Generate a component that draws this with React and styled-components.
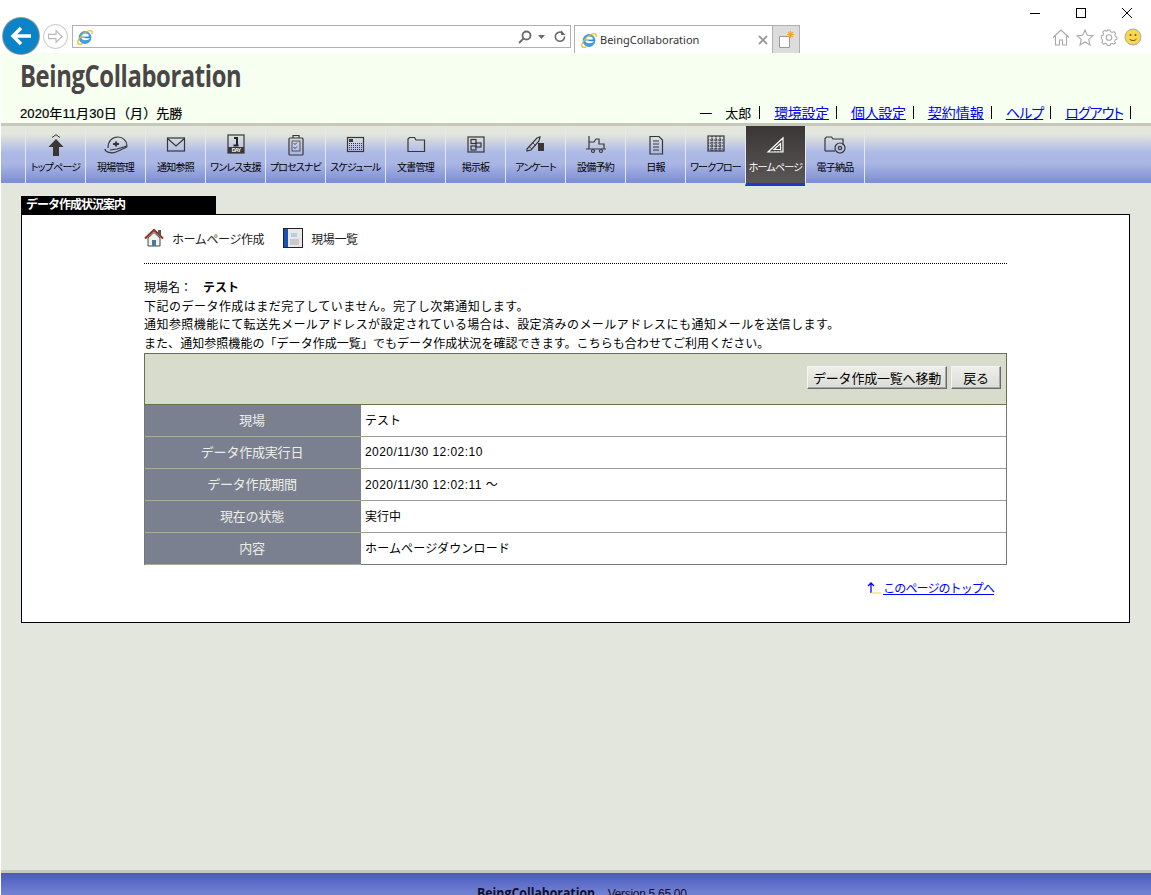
import React from "react";
import styled, { createGlobalStyle } from "styled-components";

const GlobalStyle = createGlobalStyle`
  html, body {
    margin: 0;
    padding: 0;
    height: 895px;
    overflow: hidden;
    background: #fff;
    font-family: "Liberation Sans", "Noto Sans CJK JP", sans-serif;
    font-size: 12px;
    color: #000;
  }
`;

const Page = styled.div`
  width: 1151px;
  height: 895px;
  overflow: hidden;
  display: flex;
  flex-direction: column;
  background: #fff;
`;

/* browser frame */
const Chrome = styled.div`
  height: 53px;
  flex: none;
  background: #fff;
  display: flex;
  flex-direction: column;
  overflow: visible;
`;
const WindowRow = styled.div`
  height: 18px;
  display: flex;
  justify-content: flex-end;
  align-items: flex-start;
  padding: 8px 19px 0 0;
  box-sizing: border-box;
  gap: 36px;
`;
const BrowserRow = styled.div`
  height: 35px;
  display: flex;
  align-items: flex-start;
  padding-left: 3px;
`;
const BackButton = styled.div`
  width: 36px;
  height: 36px;
  border-radius: 50%;
  background: #0a84c6;
  box-shadow: 0 0 0 1px #9a9a9a;
  display: flex;
  align-items: center;
  justify-content: center;
  flex: none;
  position: relative;
  z-index: 2;
`;
const ForwardButton = styled.div`
  width: 25px;
  height: 25px;
  margin: 6px 4px 0 4px;
  border: 1px solid #c4c4c4;
  border-radius: 50%;
  box-sizing: border-box;
  display: flex;
  align-items: center;
  justify-content: center;
  flex: none;
`;
const AddressBar = styled.div`
  width: 499px;
  height: 23px;
  margin-top: 7px;
  border: 1px solid #b0b0b0;
  box-sizing: border-box;
  display: flex;
  align-items: center;
  justify-content: space-between;
  padding: 0 4px 0 3px;
  flex: none;
`;
const AddressTools = styled.div`
  display: flex;
  align-items: center;
  gap: 6px;
`;
const Tab = styled.div`
  width: 199px;
  height: 28px;
  margin: 7px 0 0 3px;
  border: 1px solid #b0b0b0;
  border-bottom: none;
  box-sizing: border-box;
  display: flex;
  align-items: center;
  padding: 0 4px 0 5px;
  gap: 2px;
  flex: none;
  font-family: "Noto Sans", sans-serif;
  font-size: 11px;
  color: #333;
`;
const TabTitle = styled.span`
  flex: 1;
`;
const NewTab = styled.div`
  width: 27px;
  height: 28px;
  margin-top: 7px;
  background: #dcdcdc;
  border: 1px solid #b0b0b0;
  border-left: none;
  border-bottom: none;
  box-sizing: border-box;
  display: flex;
  align-items: center;
  justify-content: center;
  flex: none;
`;
const BrowserTools = styled.div`
  margin: 10px 9px 0 auto;
  display: flex;
  align-items: center;
  gap: 6px;
`;

/* site header */
const Header = styled.header`
  height: 70px;
  flex: none;
  margin-left: 1px;
  background: #f7fff0;
  padding: 0 20px 0 19px;
  display: flex;
  flex-direction: column;
  justify-content: space-between;
  box-sizing: border-box;
`;
const Logo = styled.div`
  font-family: "Open Sans", sans-serif;
  font-weight: 700;
  font-size: 31px;
  line-height: 44px;
  color: #4a4646;
  letter-spacing: -0.5px;
  transform: scaleX(0.768);
  transform-origin: left center;
  white-space: nowrap;
`;
const HeaderBottom = styled.div`
  display: flex;
  justify-content: space-between;
  align-items: center;
  height: 20px;
  margin-bottom: 1px;
  font-size: 13px;
`;
const DateText = styled.div`
  -webkit-text-stroke: 0.2px #000;
  letter-spacing: 0.1px;
`;
const UserMenu = styled.div`
  display: flex;
  align-items: center;
  font-size: 14px;
  font-feature-settings: "palt";
`;
const UserName = styled.span`
  white-space: pre;
  margin-right: 1px;
  font-size: 13px;
  font-feature-settings: normal;
`;
const MenuLink = styled.a`
  color: #0000ff;
  text-decoration: underline;
  margin-left: 14px;
  letter-spacing: ${(p) => p.$spacing || "0"};
`;
const MenuBar = styled.span`
  margin-left: 7px;
  width: 1px;
  height: 13px;
  background: #000;
`;

/* main nav */
const Nav = styled.nav`
  height: 63px;
  flex: none;
  margin-left: 1px;
  padding-left: 24px;
  border-top: 3px solid #c6c8bc;
  box-sizing: border-box;
  display: flex;
  background: linear-gradient(#e3e6dc 0, #e3e6dc 8px, #aebbe6 26px, #a9b5e2 38px, #8090d6 55px, #8090d6 57px, #e3e6dc 57px);
`;
const NavItem = styled.div`
  width: 60px;
  height: 60px;
  box-sizing: border-box;
  border-left: 1px solid #e4e8f2;
  display: flex;
  flex-direction: column;
  align-items: center;
  padding-top: 8px;
  font-size: 10px;
  white-space: nowrap;
  letter-spacing: -0.8px;
  font-feature-settings: "palt";
  color: ${(p) => (p.$active ? "#fff" : "#000")};
  background: ${(p) => (p.$active ? "linear-gradient(#3b3636, #5c5757)" : "transparent")};
  border-bottom: ${(p) => (p.$active ? "3px solid #1c3cc8" : "none")};
  &:last-child {
    border-right: 1px solid #e4e8f2;
  }
`;
const NavIcon = styled.div`
  height: 22px;
  display: flex;
  align-items: center;
  justify-content: center;
  color: ${(p) => (p.$active ? "#fff" : "#3a3636")};
`;
const NavLabel = styled.div`
  margin-top: 5px;
  line-height: 14px;
`;

/* content */
const Main = styled.main`
  flex: 1;
  min-height: 0;
  margin-left: 1px;
  background: #e3e6dc;
  padding: 10px 21px 0 20px;
`;
const PanelTitle = styled.div`
  width: 195px;
  height: 18px;
  background: #000;
  color: #fff;
  font-size: 12px;
  font-weight: 700;
  line-height: 18px;
  padding-left: 5px;
  box-sizing: border-box;
  letter-spacing: -1px;
`;
const Panel = styled.section`
  height: 409px;
  background: #fff;
  border: 1px solid #000;
  box-sizing: border-box;
  padding: 0 122px;
`;
const ActionRow = styled.div`
  height: 49px;
  display: flex;
  align-items: center;
  border-bottom: 1px dotted #000;
  box-sizing: border-box;
  padding-bottom: 2px;
  gap: 19px;
`;
const Action = styled.div`
  display: flex;
  align-items: center;
  gap: 8px;
  color: #222;
  font-size: 12px;
  letter-spacing: -0.4px;
`;
const Notes = styled.div`
  margin-top: 15px;
  font-size: 12px;
  line-height: 18.6px;
  color: #000;
  height: 74px;
  white-space: nowrap;
`;
const NoteLine = styled.div`
  letter-spacing: ${(p) => p.$spacing || "0"};
`;
const SiteName = styled.strong`
  margin-left: 11px;
`;
const Board = styled.div`
  border: 1px solid #777;
  border-top: none;
`;
const BoardBar = styled.div`
  height: 52px;
  box-sizing: border-box;
  background: #d8dccc;
  border: 1px solid #6e6e50;
  margin: 0 -1px;
  display: flex;
  align-items: center;
  justify-content: flex-end;
  gap: 4px;
  padding: 0 5px 3px 0;
`;
const BarButton = styled.button`
  height: 23px;
  padding: 0 5px;
  min-width: ${(p) => p.$min || "auto"};
  font-family: inherit;
  font-size: 13px;
  letter-spacing: -0.2px;
  color: #000;
  background: linear-gradient(#eeeeea, #dcdcd6);
  border: 1px solid;
  border-color: #f4f4f0 #6a6a6a #6a6a6a #f4f4f0;
  box-shadow: inset -1px -1px 0 #a8a8a4;
  white-space: nowrap;
`;
const Row = styled.div`
  display: grid;
  grid-template-columns: 216px 1fr;
  height: 32px;
  border-bottom: 1px solid #9a9a9a;
  box-sizing: border-box;
  &:last-child {
    border-bottom: none;
    height: 31px;
  }
`;
const RowHead = styled.div`
  background: #7a8090;
  color: #eceee6;
  font-size: 13px;
  letter-spacing: -0.2px;
  padding: 0 2px 2px 0;
  display: flex;
  align-items: center;
  justify-content: center;
  box-shadow: 0 1px 0 #a8ac98;
`;
const RowValue = styled.div`
  display: flex;
  align-items: center;
  padding: 0 0 2px 4px;
  font-size: 12px;
  letter-spacing: ${(p) => p.$spacing || "0"};
`;
const TopLink = styled.a`
  margin: 14px 13px 0 0;
  display: flex;
  justify-content: flex-end;
  align-items: center;
  color: #0000ff;
  font-size: 12px;
  letter-spacing: -0.9px;
`;
const TopLinkText = styled.span`
  text-decoration: underline;
  margin-left: 1px;
`;

const Footer = styled.footer`
  height: 25px;
  flex: none;
  margin-left: 1px;
  border-top: 3px solid #c6c8bc;
  box-sizing: border-box;
  background: linear-gradient(#4a5ac0, #7484d2);
  display: flex;
  justify-content: center;
  gap: 12px;
  padding: 12px 0 0 12px;
  color: #101030;
  font-size: 12px;
  white-space: nowrap;
`;
const FooterBrand = styled.strong`
  font-family: "Open Sans", sans-serif;
  font-size: 14px;
  line-height: 16px;
  transform: scaleX(0.88);
  margin: 0 -8px;
`;
const FooterVersion = styled.span`
  line-height: 18px;
  letter-spacing: -0.3px;
`;

const IeIcon = ({ size = 18 }) => (
  <svg width={size} height={size} viewBox="0 0 18 18">
    <ellipse cx="9" cy="9.5" rx="6.4" ry="6.4" fill="#3f9fdc" />
    <ellipse cx="9.2" cy="8" rx="3.6" ry="2.4" fill="#fff" />
    <rect x="5.2" y="8.6" width="8.6" height="1.6" fill="#2d87c9" />
    <path d="M9 12.2c-2 0-3.6-1-3.9-2.6h3.4c.2.6 1 .9 1.8.6l3.6 0C13.2 11.5 11.3 12.2 9 12.2z" fill="#fff" />
    <path d="M2 15.5C.5 13 6.5 5 12 3c3-1 5 0 4 3M2 15.5c1.2 1.3 3.5.8 5-.2" fill="none" stroke="#f0b823" strokeWidth="1.2" />
  </svg>
);

const I = ({ children, w = 24, h = 22 }) => (
  <svg width={w} height={h} viewBox={`0 0 ${w} ${h}`} fill="none" stroke="currentColor" strokeWidth="1.2">
    {children}
  </svg>
);

const icons = {
  top: (
    <I>
      <path d="M12 5 4.5 13H9v9h6v-9h4.5z" fill="#3a3636" stroke="none" />
      <path d="M8 3.5 12 .8l4 2.7" strokeWidth="1" />
    </I>
  ),
  site: (
    <I>
      <path d="M4 14C4 7 8 3 14 3c5 0 9 4 9 9l-10 3-7 1" />
      <path d="M1 15c0 3 6 5 11 3l11-5" />
      <path d="M9 10h6M12 7.5v5" strokeWidth="2" />
    </I>
  ),
  mail: (
    <I>
      <rect x="3.5" y="4" width="17" height="13" />
      <path d="m3.5 4.5 8.5 7.5 8.5-7.5" />
    </I>
  ),
  day: (
    <I>
      <rect x="4" y="1" width="16" height="18" />
      <rect x="4" y="13" width="16" height="6" fill="#3a3636" stroke="none" />
      <path d="M10 4h3v8M9.5 11.5h5" stroke="#222" strokeWidth="2" />
      <text x="12" y="18" textAnchor="middle" fontSize="5.5" fontWeight="700" fill="#fff" stroke="none">DAY</text>
    </I>
  ),
  process: (
    <I>
      <rect x="5" y="4" width="14" height="17" rx="1" />
      <path d="M9 4V1.5h6V4" />
      <rect x="8" y="7" width="8" height="10" strokeWidth="0.8" />
      <path d="m9.5 9 1.5 1.5 2-2M9.5 13l1.5 1.5 2-2" strokeWidth="0.9" />
    </I>
  ),
  schedule: (
    <I>
      <rect x="3.5" y="3.5" width="16" height="14" />
      <rect x="5" y="5" width="4" height="3" fill="#3a3636" stroke="none" />
      <path d="M5 9.5h13M5 11.5h13M5 13.5h13M5 15.5h13" strokeDasharray="1 1" />
    </I>
  ),
  folder: (
    <I>
      <path d="M4 17.5V5l1.5-1.5h5L12 6h8.5v11.5z" />
    </I>
  ),
  board: (
    <I>
      <rect x="4" y="3" width="16" height="15" />
      <rect x="7" y="5.5" width="5" height="4" />
      <rect x="12" y="9" width="5" height="4" />
      <rect x="7" y="12" width="5" height="4" />
    </I>
  ),
  survey: (
    <I>
      <path d="M3 15 13 4l3-1-1 4-8 9-4 1z" />
      <path d="M5 12.5 8 15M9 9l3 3" strokeWidth="0.8" />
      <rect x="14" y="9" width="6" height="8" fill="#3a3636" stroke="none" />
    </I>
  ),
  reserve: (
    <I>
      <path d="M5 2v13M2 15h20M5 8h5l2-3h3v5h5v5" />
      <circle cx="9" cy="17" r="1.5" />
      <circle cx="17" cy="17" r="1.5" />
    </I>
  ),
  report: (
    <I>
      <path d="M6 2.5h9l3.5 3.5v14H6z" />
      <path d="M9 7h6M9 10h6M9 13h6M9 16h6" strokeWidth="1" />
    </I>
  ),
  flow: (
    <I>
      <rect x="4" y="2" width="16" height="15" />
      <path d="M4 6h16M4 9h16M4 12h16M4 15h16M8 2v15M12 2v15M16 2v15" strokeDasharray="1.4 0.6" />
    </I>
  ),
  homepage: (
    <I>
      <path d="M4 18 19 4v14z" />
      <path d="M10 15.5 16.5 9.5v6z" />
      <path d="M17 18v-2M14 18v-1M11 18v-1" strokeWidth="0.8" />
    </I>
  ),
  delivery: (
    <I>
      <path d="M2 17V4.5L3.5 3h5L10 5h10v6" />
      <path d="M2 17h10" />
      <circle cx="17" cy="14" r="5" />
      <circle cx="17" cy="14" r="1.6" />
    </I>
  ),
};

const navItems = [
  ["トップページ", "top"],
  ["現場管理", "site"],
  ["通知参照", "mail"],
  ["ワンレス支援", "day"],
  ["プロセスナビ", "process"],
  ["スケジュール", "schedule"],
  ["文書管理", "folder"],
  ["掲示板", "board"],
  ["アンケート", "survey"],
  ["設備予約", "reserve"],
  ["日報", "report"],
  ["ワークフロー", "flow"],
  ["ホームページ", "homepage"],
  ["電子納品", "delivery"],
];

const userLinks = [
  ["環境設定", "-0.3px"],
  ["個人設定", "-0.3px"],
  ["契約情報"],
  ["ヘルプ", "-0.9px"],
  ["ログアウト", "-1px"],
];

const rows = [
  ["現場", "テスト"],
  ["データ作成実行日", "2020/11/30 12:02:10", "0.45px"],
  ["データ作成期間", "2020/11/30 12:02:11 ～", "0.45px"],
  ["現在の状態", "実行中"],
  ["内容", "ホームページダウンロード", "0.15px"],
];

const App = () => {
  return (
    <Page>
      <GlobalStyle />
      <Chrome>
        <WindowRow>
          <svg width="10" height="10" viewBox="0 0 10 10">
            <path d="M0 5.5h10" stroke="#000" />
          </svg>
          <svg width="10" height="10" viewBox="0 0 10 10">
            <rect x=".5" y=".5" width="9" height="9" fill="none" stroke="#000" />
          </svg>
          <svg width="10" height="10" viewBox="0 0 10 10">
            <path d="m0 0 10 10M10 0 0 10" stroke="#000" />
          </svg>
        </WindowRow>
        <BrowserRow>
          <BackButton>
            <svg width="22" height="20" viewBox="0 0 22 20" fill="none" stroke="#fff" strokeWidth="3.4">
              <path d="M21 10H4M11 2 3 10l8 8" />
            </svg>
          </BackButton>
          <ForwardButton>
            <svg width="17" height="15" viewBox="0 0 15 14" fill="none" stroke="#b8b8b8" strokeWidth="1">
              <path d="M1 5h7V1.5L13.5 7 8 12.5V9H1z" />
            </svg>
          </ForwardButton>
          <AddressBar>
            <IeIcon />
            <AddressTools>
              <svg width="14" height="14" viewBox="0 0 14 14" fill="none" stroke="#6a6a6a" strokeWidth="1.8">
                <circle cx="8.5" cy="5.5" r="4" />
                <path d="M5.5 8.5 1 13" />
              </svg>
              <svg width="7" height="4" viewBox="0 0 7 4">
                <path d="M0 0h7L3.5 4z" fill="#6a6a6a" />
              </svg>
              <svg width="15" height="13" viewBox="-3 0 15 13" fill="none" stroke="#6a6a6a" strokeWidth="1.6">
                <path d="M10.5 6.5A4.6 4.6 0 1 1 8 2.6" />
                <path d="M7 0v5h4.5z" fill="#6a6a6a" stroke="none" />
              </svg>
            </AddressTools>
          </AddressBar>
          <Tab>
            <IeIcon />
            <TabTitle>BeingCollaboration</TabTitle>
            <svg width="10" height="10" viewBox="0 0 10 10">
              <path d="m1 1 8 8M9 1 1 9" stroke="#999" strokeWidth="1.8" />
            </svg>
          </Tab>
          <NewTab>
            <svg width="20" height="20" viewBox="0 0 20 20">
              <path d="M3.5 6.5h10v11h-10z" fill="#fff" stroke="#999" />
              <path d="M14.5 1v7M11 4.5h7M12 2l5 5M17 2l-5 5" stroke="#f5a623" strokeWidth="1.2" />
            </svg>
          </NewTab>
          <BrowserTools>
            <svg width="18" height="17" viewBox="0 0 18 17" fill="none" stroke="#a8a8a8" strokeWidth="1.1">
              <path d="M1 8.5 9 1l8 7.5M3.5 7v9h4v-5h3v5h4V7" />
            </svg>
            <svg width="18" height="17" viewBox="0 0 18 17" fill="none" stroke="#a8a8a8" strokeWidth="1.1">
              <path d="m9 1 2.3 5.2 5.7.5-4.3 3.7 1.3 5.6L9 13l-5 3 1.3-5.6L1 6.7l5.7-.5z" />
            </svg>
            <svg width="18" height="17" viewBox="0 0 18 17" fill="none" stroke="#a8a8a8" strokeWidth="1.1">
              <circle cx="9" cy="8.5" r="2.8" />
              <path d="M7.5 1h3l.5 2 1.8.8 1.8-1 2 2-1 1.8.8 1.6 1.6.6v2.4l-1.8.6-.7 1.6 1 1.8-2 1.4-1.8-1-1.6.7-.6 1.6h-3l-.5-1.7-1.7-.7-1.8 1-2-1.9 1-1.7-.7-1.7L1 10V7.4l1.8-.6.7-1.7-1-1.8 2-1.8 1.8 1 1.7-.7z" transform="scale(0.92) translate(0.4 0)" />
            </svg>
            <svg width="18" height="18" viewBox="0 0 18 18">
              <circle cx="9" cy="9" r="8" fill="#f8d64e" stroke="#aaa" />
              <circle cx="6.5" cy="7" r="1" fill="#6b5a10" />
              <circle cx="11.5" cy="7" r="1" fill="#6b5a10" />
              <path d="M5.5 11c1.5 2 5.5 2 7 0" fill="none" stroke="#6b5a10" />
            </svg>
          </BrowserTools>
        </BrowserRow>
      </Chrome>

      <Header>
        <Logo>BeingCollaboration</Logo>
        <HeaderBottom>
          <DateText>2020年11月30日（月）先勝</DateText>
          <UserMenu>
            <UserName>一　太郎</UserName>
            <MenuBar />
            {userLinks.map(([label, spacing]) => (
              <React.Fragment key={label}>
                <MenuLink href="#" $spacing={spacing}>{label}</MenuLink>
                <MenuBar />
              </React.Fragment>
            ))}
          </UserMenu>
        </HeaderBottom>
      </Header>

      <Nav>
        {navItems.map(([label, icon]) => (
          <NavItem key={label} $active={icon === "homepage"}>
            <NavIcon $active={icon === "homepage"}>{icons[icon]}</NavIcon>
            <NavLabel>{label}</NavLabel>
          </NavItem>
        ))}
      </Nav>

      <Main>
        <PanelTitle>データ作成状況案内</PanelTitle>
        <Panel>
          <ActionRow>
            <Action>
              <svg width="20" height="20" viewBox="0 0 20 20">
                <path d="M1 10.5 10 2l9 8.5" fill="none" stroke="#8a3020" strokeWidth="2" />
                <path d="M4 10v8h12v-8l-6-5.5z" fill="#f2f2ea" stroke="#444" />
                <rect x="8" y="12" width="4" height="6" fill="#4a7a9a" />
                <rect x="14" y="2" width="3" height="5" fill="#555" />
              </svg>
              ホームページ作成
            </Action>
            <Action>
              <svg width="20" height="20" viewBox="0 0 20 20">
                <rect x=".5" y=".5" width="19" height="19" fill="#e8e8e8" stroke="#222" />
                <rect x="1" y="1" width="4" height="18" fill="#1a50b8" />
                <rect x="8" y="5" width="6" height="4" fill="#b8cce0" />
                <path d="M7 12h9M7 14h9M7 16h9" stroke="#aaa" />
              </svg>
              現場一覧
            </Action>
          </ActionRow>
          <Notes>
            <NoteLine>
              現場名：<SiteName>テスト</SiteName>
            </NoteLine>
            <NoteLine $spacing="0.48px">下記のデータ作成はまだ完了していません。完了し次第通知します。</NoteLine>
            <NoteLine $spacing="0.45px">通知参照機能にて転送先メールアドレスが設定されている場合は、設定済みのメールアドレスにも通知メールを送信します。</NoteLine>
            <NoteLine $spacing="0.05px">また、通知参照機能の「データ作成一覧」でもデータ作成状況を確認できます。こちらも合わせてご利用ください。</NoteLine>
          </Notes>
          <Board>
            <BoardBar>
              <BarButton>データ作成一覧へ移動</BarButton>
              <BarButton $min="50px">戻る</BarButton>
            </BoardBar>
            {rows.map(([head, value, spacing]) => (
              <Row key={head}>
                <RowHead>{head}</RowHead>
                <RowValue $spacing={spacing}>{value}</RowValue>
              </Row>
            ))}
          </Board>
          <TopLink href="#">
            <svg width="16" height="13" viewBox="0 0 16 13" fill="none">
              <path d="M5 12V2M2 5l3-3 3 3" stroke="#0000ff" strokeWidth="1.3" />
              <path d="M5 12h10" stroke="#f0dc40" />
            </svg>
            <TopLinkText>このページのトップへ</TopLinkText>
          </TopLink>
        </Panel>
      </Main>

      <Footer>
        <FooterBrand>BeingCollaboration</FooterBrand>
        <FooterVersion>Version 5.65.00</FooterVersion>
      </Footer>
    </Page>
  );
};

export default App;
